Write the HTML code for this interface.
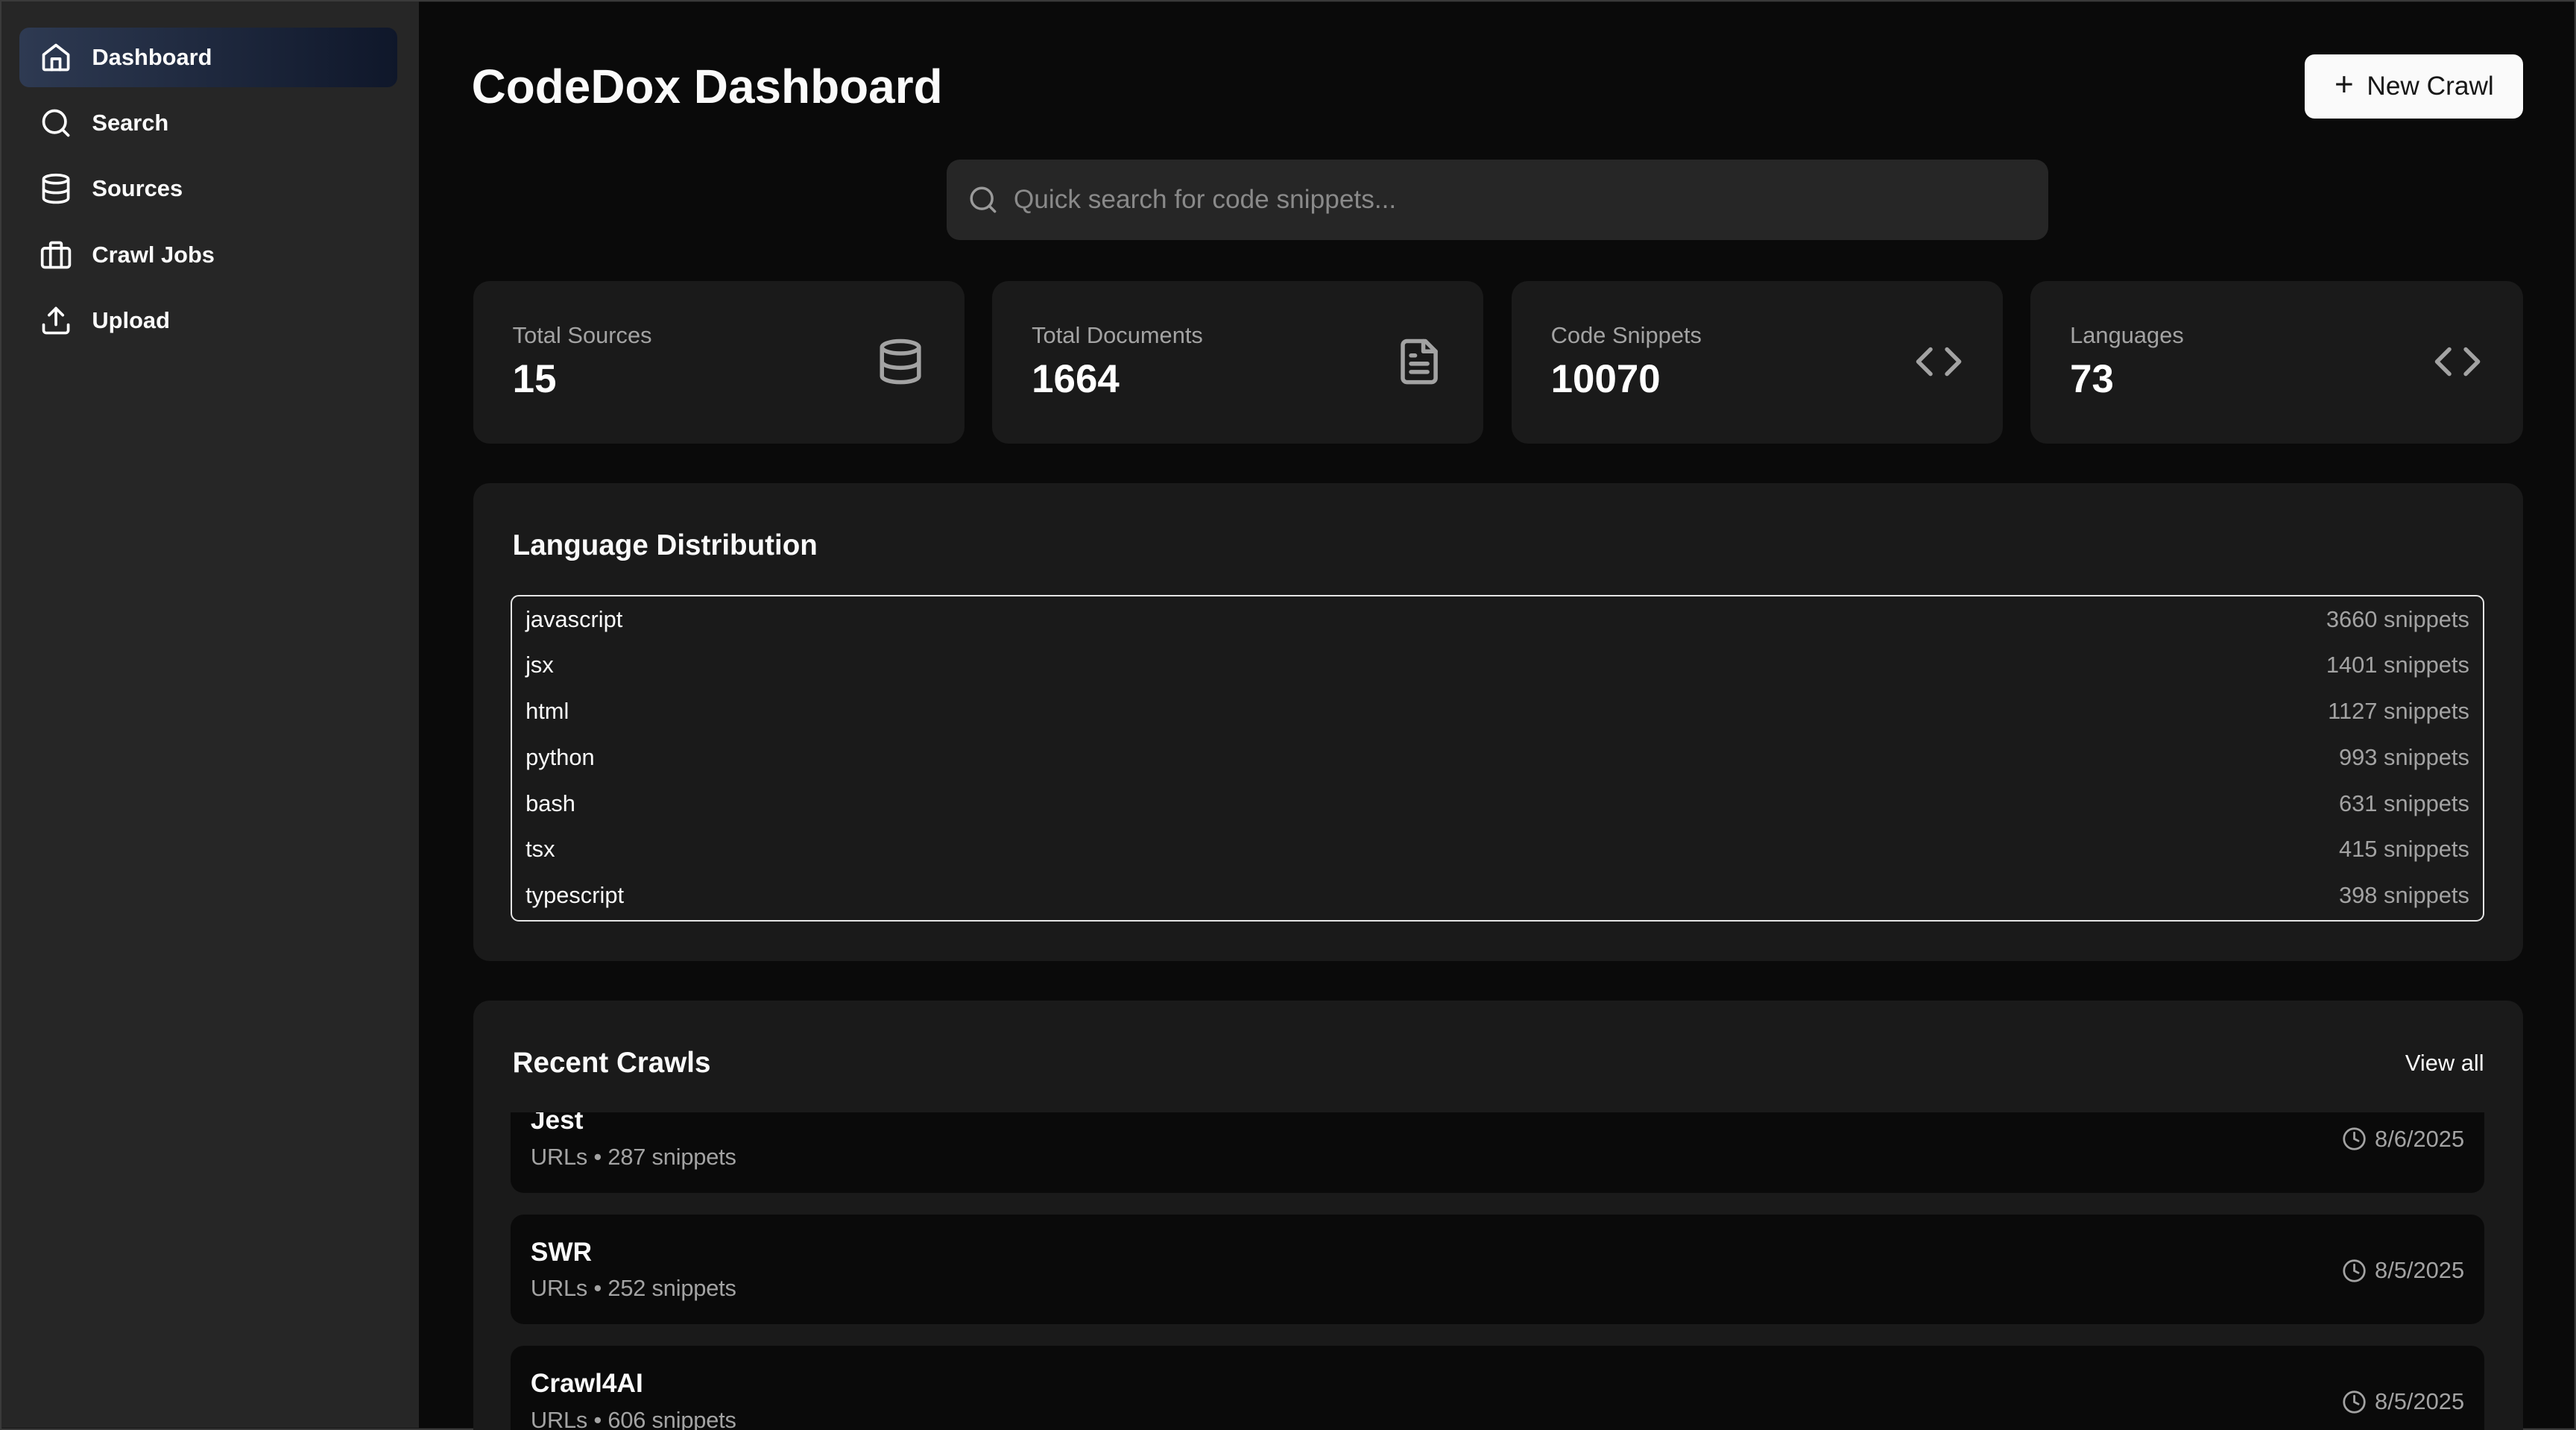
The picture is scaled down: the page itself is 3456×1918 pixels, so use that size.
<!DOCTYPE html>
<html><head><meta charset="utf-8"><style>
html,body{margin:0;padding:0;background:#0a0a0a;overflow:hidden}
body{width:3456px;height:1918px}
#r{zoom:2.20408;width:1568px;height:870px;position:relative;font-family:"Liberation Sans",sans-serif;color:#fafafa;background:#0a0a0a;overflow:hidden;box-shadow:inset 0 0 0 1px #3a3a3a}
.a{position:absolute}
.sb{left:1px;top:1px;width:254px;height:868px;background:#262626}
.nav{left:11px;width:230px;height:36px;border-radius:6px;display:flex;align-items:center;font-size:14px;font-weight:bold}
.nav svg{margin-left:12px;margin-right:12px}
.card{background:#1a1a1a;border-radius:10px}
.lbl{font-size:14px;color:#a3a3a3}
.num{font-size:24px;font-weight:bold;color:#fff}
.row{position:absolute;left:8px;right:8px;height:28px;display:flex;justify-content:space-between;align-items:center;font-size:14px}
.row span:last-child{color:#a3a3a3}
.item{position:absolute;left:0;right:0;height:67px;background:#0a0a0a;border-radius:8px}
.item .t{position:absolute;left:12px;top:14px;font-size:16px;font-weight:bold}
.item .s{position:absolute;left:12px;top:37px;font-size:14px;color:#a3a3a3;letter-spacing:-0.1px}
.item .d{position:absolute;right:12px;top:26px;font-size:14px;color:#a3a3a3;display:flex;align-items:center;gap:5px}
</style></head><body><div id="r">
<div class="a sb">
 <div class="a nav" style="top:16px;background:linear-gradient(90deg,#2e3a52,#0f172a)">
  <svg width="20" height="20" viewBox="0 0 24 24" fill="none" stroke="#fff" stroke-width="2" stroke-linecap="round" stroke-linejoin="round"><path d="M3 10l9-7 9 7v10a1 1 0 0 1-1 1H4a1 1 0 0 1-1-1z"/><path d="M9 21v-8h6v8"/></svg>Dashboard</div>
 <div class="a nav" style="top:56px"><svg width="20" height="20" viewBox="0 0 24 24" fill="none" stroke="#fff" stroke-width="2" stroke-linecap="round"><circle cx="11" cy="11" r="8"/><path d="M21 21l-4.3-4.3"/></svg>Search</div>
 <div class="a nav" style="top:96px"><svg width="20" height="20" viewBox="0 0 24 24" fill="none" stroke="#fff" stroke-width="2"><ellipse cx="12" cy="5" rx="9" ry="3"/><path d="M3 5v14c0 1.7 4 3 9 3s9-1.3 9-3V5"/><path d="M3 12c0 1.7 4 3 9 3s9-1.3 9-3"/></svg>Sources</div>
 <div class="a nav" style="top:136px"><svg width="20" height="20" viewBox="0 0 24 24" fill="none" stroke="#fff" stroke-width="2" stroke-linejoin="round"><rect x="2" y="7" width="20" height="14" rx="2"/><path d="M8 21V4a1 1 0 0 1 1-1h6a1 1 0 0 1 1 1v17"/></svg>Crawl Jobs</div>
 <div class="a nav" style="top:176px"><svg width="20" height="20" viewBox="0 0 24 24" fill="none" stroke="#fff" stroke-width="2" stroke-linecap="round" stroke-linejoin="round"><path d="M21 15v4a2 2 0 0 1-2 2H5a2 2 0 0 1-2-2v-4"/><path d="M17 8l-5-5-5 5"/><path d="M12 3v12"/></svg>Upload</div>
</div>
<div class="a" style="left:287px;top:36px;font-size:29px;font-weight:bold">CodeDox Dashboard</div>
<div class="a" style="left:1403px;top:33px;width:133px;height:39px;background:#fafafa;border-radius:6px;color:#171717;font-size:16px;display:flex;align-items:center;justify-content:center;gap:8px"><span style="font-size:20px;font-weight:300;margin-top:-2px">+</span>New Crawl</div>
<div class="a" style="left:576px;top:97px;width:671px;height:49px;background:#262626;border-radius:8px;display:flex;align-items:center;font-size:16px;color:#8a8a8a">
 <svg style="margin:0 9px 0 13px" width="19" height="19" viewBox="0 0 24 24" fill="none" stroke="#9a9a9a" stroke-width="2" stroke-linecap="round"><circle cx="11" cy="11" r="8"/><path d="M21 21l-4.3-4.3"/></svg>Quick search for code snippets...</div>

<div class="a card" style="left:288px;top:171px;width:299px;height:99px"><div class="a lbl" style="left:24px;top:25px">Total Sources</div><div class="a num" style="left:24px;top:46px">15</div>
<svg class="a" style="left:245px;top:34px" width="30" height="30" viewBox="0 0 24 24" fill="none" stroke="#a3a3a3" stroke-width="2"><ellipse cx="12" cy="5" rx="9" ry="3"/><path d="M3 5v14c0 1.7 4 3 9 3s9-1.3 9-3V5"/><path d="M3 12c0 1.7 4 3 9 3s9-1.3 9-3"/></svg></div>
<div class="a card" style="left:604px;top:171px;width:299px;height:99px"><div class="a lbl" style="left:24px;top:25px">Total Documents</div><div class="a num" style="left:24px;top:46px">1664</div>
<svg class="a" style="left:245px;top:34px" width="30" height="30" viewBox="0 0 24 24" fill="none" stroke="#a3a3a3" stroke-width="2" stroke-linecap="round" stroke-linejoin="round"><path d="M15 2H6a2 2 0 0 0-2 2v16a2 2 0 0 0 2 2h12a2 2 0 0 0 2-2V7z"/><path d="M14 2v5h6"/><path d="M10 9H8M16 13H8M16 17H8"/></svg></div>
<div class="a card" style="left:920px;top:171px;width:299px;height:99px"><div class="a lbl" style="left:24px;top:25px">Code Snippets</div><div class="a num" style="left:24px;top:46px">10070</div>
<svg class="a" style="left:245px;top:34px" width="30" height="30" viewBox="0 0 24 24" fill="none" stroke="#a3a3a3" stroke-width="2" stroke-linecap="round" stroke-linejoin="round"><path d="M16 18l6-6-6-6M8 6l-6 6 6 6"/></svg></div>
<div class="a card" style="left:1236px;top:171px;width:300px;height:99px"><div class="a lbl" style="left:24px;top:25px">Languages</div><div class="a num" style="left:24px;top:46px">73</div>
<svg class="a" style="left:245px;top:34px" width="30" height="30" viewBox="0 0 24 24" fill="none" stroke="#a3a3a3" stroke-width="2" stroke-linecap="round" stroke-linejoin="round"><path d="M16 18l6-6-6-6M8 6l-6 6 6 6"/></svg></div>

<div class="a card" style="left:288px;top:294px;width:1248px;height:291px">
 <div class="a" style="left:24px;top:28px;font-size:17.5px;font-weight:bold">Language Distribution</div>
 <div class="a" style="left:23px;top:68px;width:1201px;height:199px;border:1px solid #e5e5e5;border-radius:5px;box-sizing:border-box">
  <div class="row" style="top:0"><span>javascript</span><span>3660 snippets</span></div>
  <div class="row" style="top:28px"><span>jsx</span><span>1401 snippets</span></div>
  <div class="row" style="top:56px"><span>html</span><span>1127 snippets</span></div>
  <div class="row" style="top:84px"><span>python</span><span>993 snippets</span></div>
  <div class="row" style="top:112px"><span>bash</span><span>631 snippets</span></div>
  <div class="row" style="top:140px"><span>tsx</span><span>415 snippets</span></div>
  <div class="row" style="top:168px"><span>typescript</span><span>398 snippets</span></div>
 </div>
</div>

<div class="a card" style="left:288px;top:609px;width:1248px;height:300px">
 <div class="a" style="left:24px;top:28px;font-size:17.5px;font-weight:bold">Recent Crawls</div>
 <div class="a" style="right:24px;top:30px;font-size:14px">View all</div>
 <div class="a" style="left:23px;top:68px;width:1201px;height:232px;overflow:hidden">
  <div class="item" style="top:-18px"><div class="t">Jest</div><div class="s">URLs • 287 snippets</div><div class="d"><svg width="15" height="15" viewBox="0 0 24 24" fill="none" stroke="#a3a3a3" stroke-width="2" stroke-linecap="round"><circle cx="12" cy="12" r="10"/><path d="M12 6v6l4 2"/></svg>8/6/2025</div></div>
  <div class="item" style="top:62px"><div class="t">SWR</div><div class="s">URLs • 252 snippets</div><div class="d"><svg width="15" height="15" viewBox="0 0 24 24" fill="none" stroke="#a3a3a3" stroke-width="2" stroke-linecap="round"><circle cx="12" cy="12" r="10"/><path d="M12 6v6l4 2"/></svg>8/5/2025</div></div>
  <div class="item" style="top:142px"><div class="t">Crawl4AI</div><div class="s">URLs • 606 snippets</div><div class="d"><svg width="15" height="15" viewBox="0 0 24 24" fill="none" stroke="#a3a3a3" stroke-width="2" stroke-linecap="round"><circle cx="12" cy="12" r="10"/><path d="M12 6v6l4 2"/></svg>8/5/2025</div></div>
 </div>
</div>
</div></body></html>
